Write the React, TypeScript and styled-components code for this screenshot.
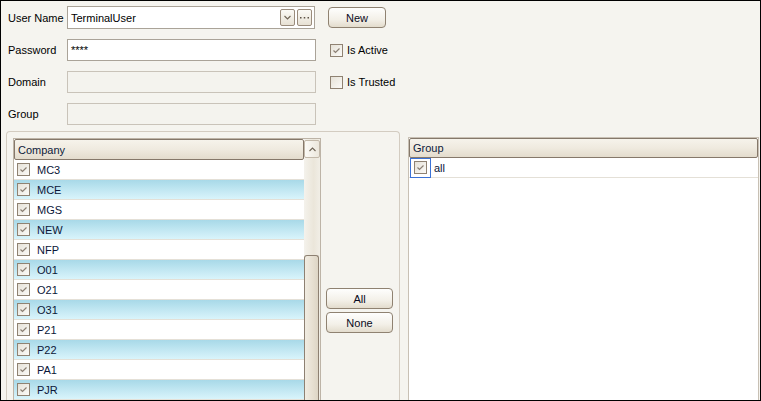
import React from "react";
import styled, { createGlobalStyle } from "styled-components";

const Global = createGlobalStyle`
  html, body { margin: 0; padding: 0; background: #fff; }
  * { box-sizing: border-box; }
`;

const Window = styled.div`
  width: 761px;
  height: 401px;
  border: 1px solid #000;
  background: #f5f4ef;
  display: flex;
  flex-direction: column;
  overflow: hidden;
  font-family: "Liberation Sans", Arial, sans-serif;
  font-size: 11px;
  color: #000;
`;

const Form = styled.div`
  display: grid;
  grid-template-columns: 59px 249px auto;
  grid-template-rows: 23px 22px 22px 22px;
  column-gap: 0;
  row-gap: 10px;
  padding: 5px 0 0 7px;
`;

const Label = styled.div`
  display: flex;
  align-items: center;
  white-space: nowrap;
`;

const Side = styled.div`
  display: flex;
  align-items: center;
  padding-left: 12px;
`;

const TextBox = styled.div<{ $disabled?: boolean }>`
  height: 22px;
  border: 1px solid ${(p) => (p.$disabled ? "#c9c3b9" : "#aaa398")};
  background: ${(p) => (p.$disabled ? "#f4f3ee" : "#fff")};
  display: flex;
  align-items: center;
  padding-left: 3px;
  font-size: 11px;
`;

const Combo = styled.div`
  height: 23px;
  width: 248px;
  border: 1px solid #aaa398;
  background: #fff;
  display: flex;
  align-items: center;
  padding: 0 2px 0 3px;
  gap: 2px;
`;

const ComboText = styled.span`
  flex: 1;
`;

const SmallBtn = styled.div`
  width: 15px;
  height: 17px;
  border: 1px solid #9a8c7c;
  border-radius: 2px;
  background: linear-gradient(#fbfaf6, #e7e1d4);
  display: flex;
  align-items: center;
  justify-content: center;
`;

const Button = styled.div<{ $w: number }>`
  width: ${(p) => p.$w}px;
  height: 21px;
  border: 1px solid #8f8271;
  border-radius: 4px;
  background: linear-gradient(#fefefd 0%, #f3f0e8 60%, #e3dccd 100%);
  display: flex;
  align-items: center;
  justify-content: center;
  color: #0a0a20;
  font-size: 11px;
`;

const CheckRow = styled(Side)`
  gap: 4px;
  padding-left: 14px;
`;

const CheckBoxBox = styled.div`
  width: 13px;
  height: 13px;
  border: 1px solid #8f8272;
  background: linear-gradient(135deg, #e6e2d8, #fbfaf7);
  display: flex;
  align-items: center;
  justify-content: center;
  flex: none;
`;

const Check = ({ checked }: { checked: boolean }) => (
  <CheckBoxBox>
    {checked && (
      <svg width="11" height="11" viewBox="0 0 11 11">
        <polyline points="2.5,5.5 4.5,7.5 8.5,3.5" fill="none" stroke="#8a7f73" strokeWidth="1.2" />
      </svg>
    )}
  </CheckBoxBox>
);

const Lower = styled.div`
  flex: 1;
  display: flex;
  align-items: stretch;
  margin-top: 6px;
  min-height: 0;
`;

const Panel = styled.div`
  margin-left: 5px;
  width: 394px;
  border: 1px solid #d3ccc1;
  border-bottom: none;
  border-radius: 4px 4px 0 0;
  padding: 6px 6px 0 6px;
  display: flex;
  gap: 5px;
`;

const Grid = styled.div<{ $w: number }>`
  width: ${(p) => p.$w}px;
  border: 1px solid #bdb4a7;
  border-bottom: none;
  background: #fff;
  display: flex;
  overflow: hidden;
`;

const List = styled.div`
  flex: 1;
  display: flex;
  flex-direction: column;
  min-width: 0;
`;

const Header = styled.div<{ $h: number }>`
  height: ${(p) => p.$h}px;
  flex: none;
  border: 1px solid #85786a;
  border-radius: 2px;
  background: linear-gradient(#f6f3eb 0%, #efeadf 50%, #e3dccd 100%);
  display: flex;
  align-items: center;
  padding-left: 3px;
  color: #0d1a3a;
  font-size: 11px;
`;

const Row = styled.div<{ $alt?: boolean; $gap?: number }>`
  height: 20px;
  flex: none;
  display: flex;
  align-items: center;
  border-bottom: 1px solid #e4e0d7;
  background: ${(p) => (p.$alt ? "linear-gradient(#a8d9e8, #d9f4fb)" : "#fff")};
  padding-left: 3px;
  gap: ${(p) => p.$gap ?? 7}px;
  color: #0b1638;
`;

const FocusWrap = styled.div`
  border: 1px solid #3b72d6;
  height: 20px;
  width: 21px;
  display: flex;
  align-items: center;
  justify-content: center;
  margin-left: -2px;
`;

const ScrollBar = styled.div`
  width: 16px;
  flex: none;
  display: flex;
  flex-direction: column;
  background: linear-gradient(90deg, #f4f2ec, #ebe6da 60%, #f1eee6);
`;

const ScrollUp = styled.div`
  height: 18px;
  margin-top: 1px;
  border: 1px solid #c2b8a9;
  border-radius: 2px;
  background: linear-gradient(90deg, #fbfaf6, #ece7dc);
  display: flex;
  align-items: center;
  justify-content: center;
`;

const Thumb = styled.div`
  margin-top: 97px;
  flex: 1;
  width: 15px;
  border: 1px solid #8d8072;
  border-bottom: none;
  border-radius: 3px 3px 0 0;
  background: linear-gradient(90deg, #f1ece2, #e6dfd1 60%, #ddd5c5);
`;

const BtnCol = styled.div`
  display: flex;
  flex-direction: column;
  gap: 3px;
  padding-top: 150px;
`;

const RightGrid = styled(Grid)`
  margin-left: 8px;
  margin-top: 6px;
  border-color: #c8c0b4;
`;

const companies = ["MC3", "MCE", "MGS", "NEW", "NFP", "O01", "O21", "O31", "P21", "P22", "PA1", "PJR"];

export default function App() {
  return (
    <>
      <Global />
      <Window>
        <Form>
          <Label>User Name</Label>
          <Combo>
            <ComboText>TerminalUser</ComboText>
            <SmallBtn>
              <svg width="9" height="9" viewBox="0 0 9 9">
                <polyline points="1.5,3 4.5,6 7.5,3" fill="none" stroke="#6f6456" strokeWidth="1.1" />
              </svg>
            </SmallBtn>
            <SmallBtn>
              <svg width="11" height="9" viewBox="0 0 11 9">
                <rect x="1" y="4" width="1.5" height="1.5" fill="#5c5246" />
                <rect x="4.75" y="4" width="1.5" height="1.5" fill="#5c5246" />
                <rect x="8.5" y="4" width="1.5" height="1.5" fill="#5c5246" />
              </svg>
            </SmallBtn>
          </Combo>
          <Side>
            <Button $w={58}>New</Button>
          </Side>

          <Label>Password</Label>
          <TextBox>****</TextBox>
          <CheckRow>
            <Check checked />
            Is Active
          </CheckRow>

          <Label>Domain</Label>
          <TextBox $disabled />
          <CheckRow>
            <Check checked={false} />
            Is Trusted
          </CheckRow>

          <Label>Group</Label>
          <TextBox $disabled />
          <div />
        </Form>

        <Lower>
          <Panel>
            <Grid $w={308}>
              <List>
                <Header $h={21}>Company</Header>
                {companies.map((c, i) => (
                  <Row key={c} $alt={i % 2 === 1}>
                    <Check checked />
                    {c}
                  </Row>
                ))}
              </List>
              <ScrollBar>
                <ScrollUp>
                  <svg width="9" height="9" viewBox="0 0 9 9">
                    <polyline points="1.5,6 4.5,3 7.5,6" fill="none" stroke="#6f6456" strokeWidth="1.1" />
                  </svg>
                </ScrollUp>
                <Thumb />
              </ScrollBar>
            </Grid>
            <BtnCol>
              <Button $w={67}>All</Button>
              <Button $w={67}>None</Button>
            </BtnCol>
          </Panel>

          <RightGrid $w={351}>
            <List>
              <Header $h={20}>Group</Header>
              <Row $gap={3}>
                <FocusWrap>
                  <Check checked />
                </FocusWrap>
                all
              </Row>
            </List>
          </RightGrid>
        </Lower>
      </Window>
    </>
  );
}
